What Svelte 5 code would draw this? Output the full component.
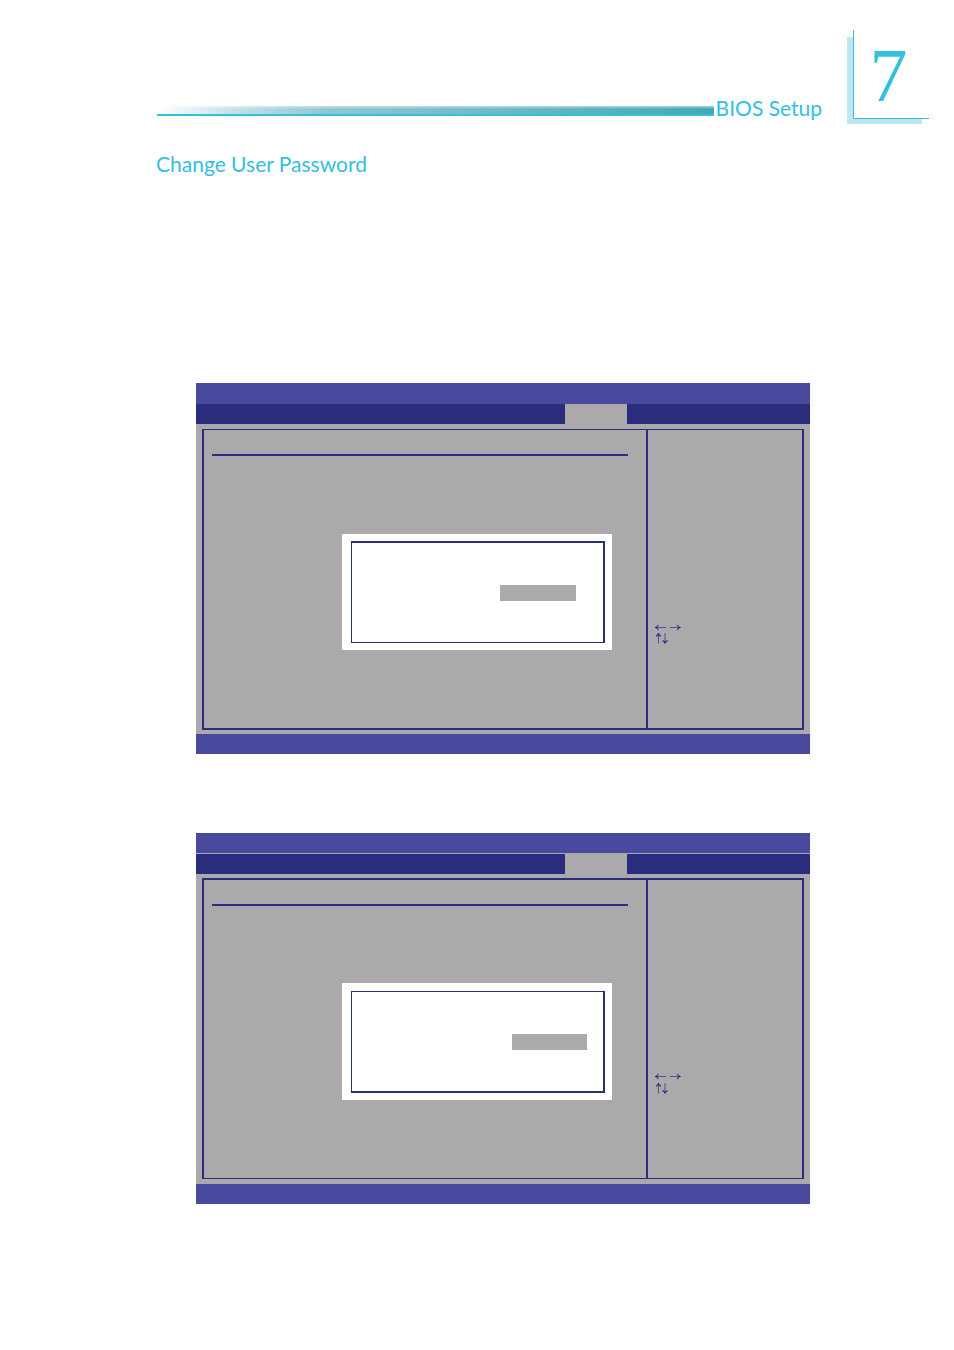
<script>
  const screens = [
    { id: 'create', label: 'Create password', ruled: false },
    { id: 'confirm', label: 'Confirm password', ruled: true }
  ]

  let passwords = $state({ create: '', confirm: '' })
</script>

<svelte:head><title>BIOS Setup</title></svelte:head>

<div class="page">
  <header>
    <div class="bar"></div>
    <p class="section">BIOS Setup</p>
    <div class="chapter">7</div>
  </header>

  <main>
    <h1>Change User Password</h1>

    {#each screens as screen}
      <section class="bios" class:ruled={screen.ruled}>
        <div class="title"></div>
        <nav class="tabs">
          <button class="tab" aria-label="Security"></button>
        </nav>
        <div class="body">
          <div class="frame">
            <div class="options">
              <div class="rule"></div>
              <form class="dialog">
                <div class="dialog-frame">
                  <input type="password" aria-label={screen.label} bind:value={passwords[screen.id]} />
                </div>
              </form>
            </div>
            <aside class="help">
              <svg width="26" height="7" viewBox="0 0 26 7" role="img" aria-label="Left and right arrows">
                <path class="shaft" d="M1 3.5H11M14.5 3.5H24.5" />
                <path class="head" d="M3.4 0.9Q2.7 2.9 0.6 3.5Q2.7 4.1 3.4 6.1M22.2 0.9Q22.9 2.9 25 3.5Q22.9 4.1 22.2 6.1" />
              </svg>
              <svg width="14" height="11" viewBox="0 0 14 11" role="img" aria-label="Up and down arrows">
                <path class="shaft" d="M3.5 0.8V10.6M10 0.2V10" />
                <path class="head" d="M0.9 3.2Q2.9 2.5 3.5 0.5Q4.1 2.5 6.1 3.2M7.4 7.6Q9.4 8.2 10 10.2Q10.6 8.2 12.6 7.6" />
              </svg>
            </aside>
          </div>
        </div>
        <div class="footer"></div>
      </section>
    {/each}
  </main>
</div>

<style>
  :global(body) { margin: 0; background: #fff; }
  .page { font-family: Lato, 'Open Sans', sans-serif; color: #33c0de; padding-bottom: 146px; }

  header { display: flex; align-items: flex-end; padding: 30px 25px 0 157px; isolation: isolate; }
  .bar { flex: 1; height: 8px; margin-bottom: 8px; border-bottom: 2px solid #33c0de; background: linear-gradient(to bottom, rgba(255,255,255,0.5), rgba(255,255,255,0) 3px), linear-gradient(to right, #fff, #c4e1e8 14%, #8fc8d3 30%, #41a9b7 100%); }
  .section { margin: 0 31px 3px 2px; font-size: 21px; line-height: 26px; }
  .chapter { position: relative; box-sizing: border-box; width: 76px; height: 89px; margin-bottom: 5px; padding-right: 6px; border-left: 1px solid #33c0de; border-bottom: 1px solid #33c0de; background: #fff; font-family: 'Liberation Serif', serif; font-size: 76px; line-height: 90px; text-align: center; }
  .chapter::before { content: ''; position: absolute; z-index: -1; left: -7px; top: 7px; right: 7px; bottom: -6px; background: #c0e6ef; }

  main { padding: 0 144px 0 196px; }
  h1 { margin: 27px 0 206px -40px; font-size: 21px; line-height: 26px; font-weight: 400; }

  .bios + .bios { margin-top: 79px; }
  .title { height: 21px; background: #494a9e; }
  .tabs { display: flex; justify-content: flex-end; height: 20px; padding-right: 183px; background: #292d7c; }
  .tab { width: 62px; padding: 0; border: none; border-radius: 0; background: #aba9ab; cursor: pointer; }
  .body { padding: 5px 6px 4px; background: #aba9ab; }
  .frame { display: flex; box-sizing: border-box; min-height: 301px; border: 2px solid #292d7c; border-top-width: 1px; }
  .options { flex: 1; padding: 24px 18px 0 8px; }
  .rule { height: 2px; background: #292d7c; }
  .dialog { box-sizing: border-box; width: 270px; margin: 78px 16px 0 auto; padding: 7px 7px 7px 9px; background: #fff; }
  .dialog-frame { display: flex; justify-content: flex-end; box-sizing: border-box; height: 102px; padding: 42px 27px 0 0; border: 1px solid #292d7c; border-width: 2px 2px 1px 1px; }
  input { box-sizing: border-box; width: 76px; height: 16px; padding: 0 4px; border: none; border-radius: 0; outline: none; background: #aba9ab; color: #292d7c; font-size: 12px; }
  .help { display: flex; flex-direction: column; gap: 2px; box-sizing: border-box; width: 156px; padding: 194px 7px 0; border-left: 2px solid #292d7c; }
  .help svg { fill: none; stroke: #292d7c; }
  .shaft { stroke-width: 0.7; }
  .head { stroke-width: 1.1; }
  .footer { height: 20px; background: #494a9e; }

  .ruled .title { height: 20px; border-bottom: 1px solid #aba9ab; }
  .ruled .body { padding: 4px 6px 5px; }
  .ruled .frame { border-width: 2px 2px 1px; }
  .ruled .dialog { margin-top: 77px; padding-top: 8px; }
  .ruled .dialog-frame { padding-right: 16px; border-width: 1px 2px 2px 1px; }
  .ruled input { width: 75px; }
  .ruled .help { gap: 3px; padding-top: 193px; }
</style>
